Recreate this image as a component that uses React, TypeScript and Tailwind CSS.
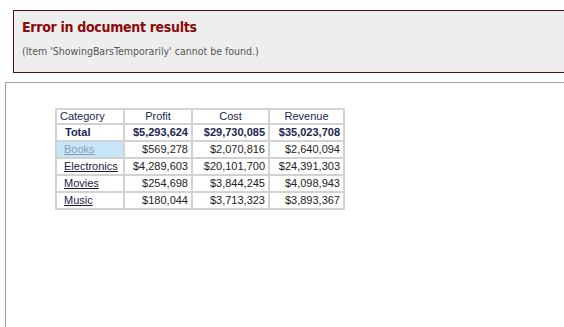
import React from 'react';

type Row = { name: string; profit: string; cost: string; revenue: string; selected?: boolean };

const rows: Row[] = [
  { name: 'Books', profit: '$569,278', cost: '$2,070,816', revenue: '$2,640,094', selected: true },
  { name: 'Electronics', profit: '$4,289,603', cost: '$20,101,700', revenue: '$24,391,303' },
  { name: 'Movies', profit: '$254,698', cost: '$3,844,245', revenue: '$4,098,943' },
  { name: 'Music', profit: '$180,044', cost: '$3,713,323', revenue: '$3,893,367' },
];

const cell = 'border-2 border-[#d2d2d2] px-[3px] leading-none';

const App: React.FC = () => {
  return (
    <div className="w-[564px] h-[327px] overflow-hidden bg-white font-['Liberation_Sans',Arial,sans-serif]">
      {/* Error banner */}
      <div className="pt-[10px] pl-[13px]">
        <div className="h-[63px] w-[560px] border border-[#4a1212] bg-[#eeeeee] pl-[8px] pt-[6px]">
          <div className="text-[14px] tracking-[-0.3px] font-bold text-[#8c0a0a] leading-[20px] font-['DejaVu_Sans_Condensed','Liberation_Sans',sans-serif]">
            Error in document results
          </div>
          <div className="mt-[7px] text-[10.5px] text-[#555555] leading-[14px] font-['DejaVu_Sans_Condensed','Liberation_Sans',sans-serif]">
            (Item 'ShowingBarsTemporarily' cannot be found.)
          </div>
        </div>
      </div>

      {/* Results panel */}
      <div className="mt-[9px] ml-[5px] h-[300px] border-t border-l border-[#a0a0a0] pl-[49px] pt-[25px]">
        <table className="border-collapse text-[11px] text-[#222222]">
          <thead>
            <tr className="h-[15px] text-[#1c2650]">
              <th className={`${cell} w-[68px] text-left font-normal`}>Category</th>
              <th className={`${cell} w-[68px] text-center font-normal`}>Profit</th>
              <th className={`${cell} w-[77px] text-center font-normal`}>Cost</th>
              <th className={`${cell} w-[75px] text-center font-normal`}>Revenue</th>
            </tr>
          </thead>
          <tbody>
            <tr className="h-[17px] font-bold text-[#1c2650]">
              <td className={`${cell} pl-[8px]`}>Total</td>
              <td className={`${cell} text-right`}>$5,293,624</td>
              <td className={`${cell} text-right`}>$29,730,085</td>
              <td className={`${cell} text-right`}>$35,023,708</td>
            </tr>
            {rows.map((r) => (
              <tr key={r.name} className="h-[17px]">
                <td className={`${cell} pl-[7px] ${r.selected ? 'bg-[#c6e5f9]' : ''}`}>
                  <span className={`underline ${r.selected ? 'text-[#8a9cb4]' : 'text-[#1a1a44]'}`}>{r.name}</span>
                </td>
                <td className={`${cell} text-right`}>{r.profit}</td>
                <td className={`${cell} text-right`}>{r.cost}</td>
                <td className={`${cell} text-right`}>{r.revenue}</td>
              </tr>
            ))}
          </tbody>
        </table>
      </div>
    </div>
  );
};

export default App;
